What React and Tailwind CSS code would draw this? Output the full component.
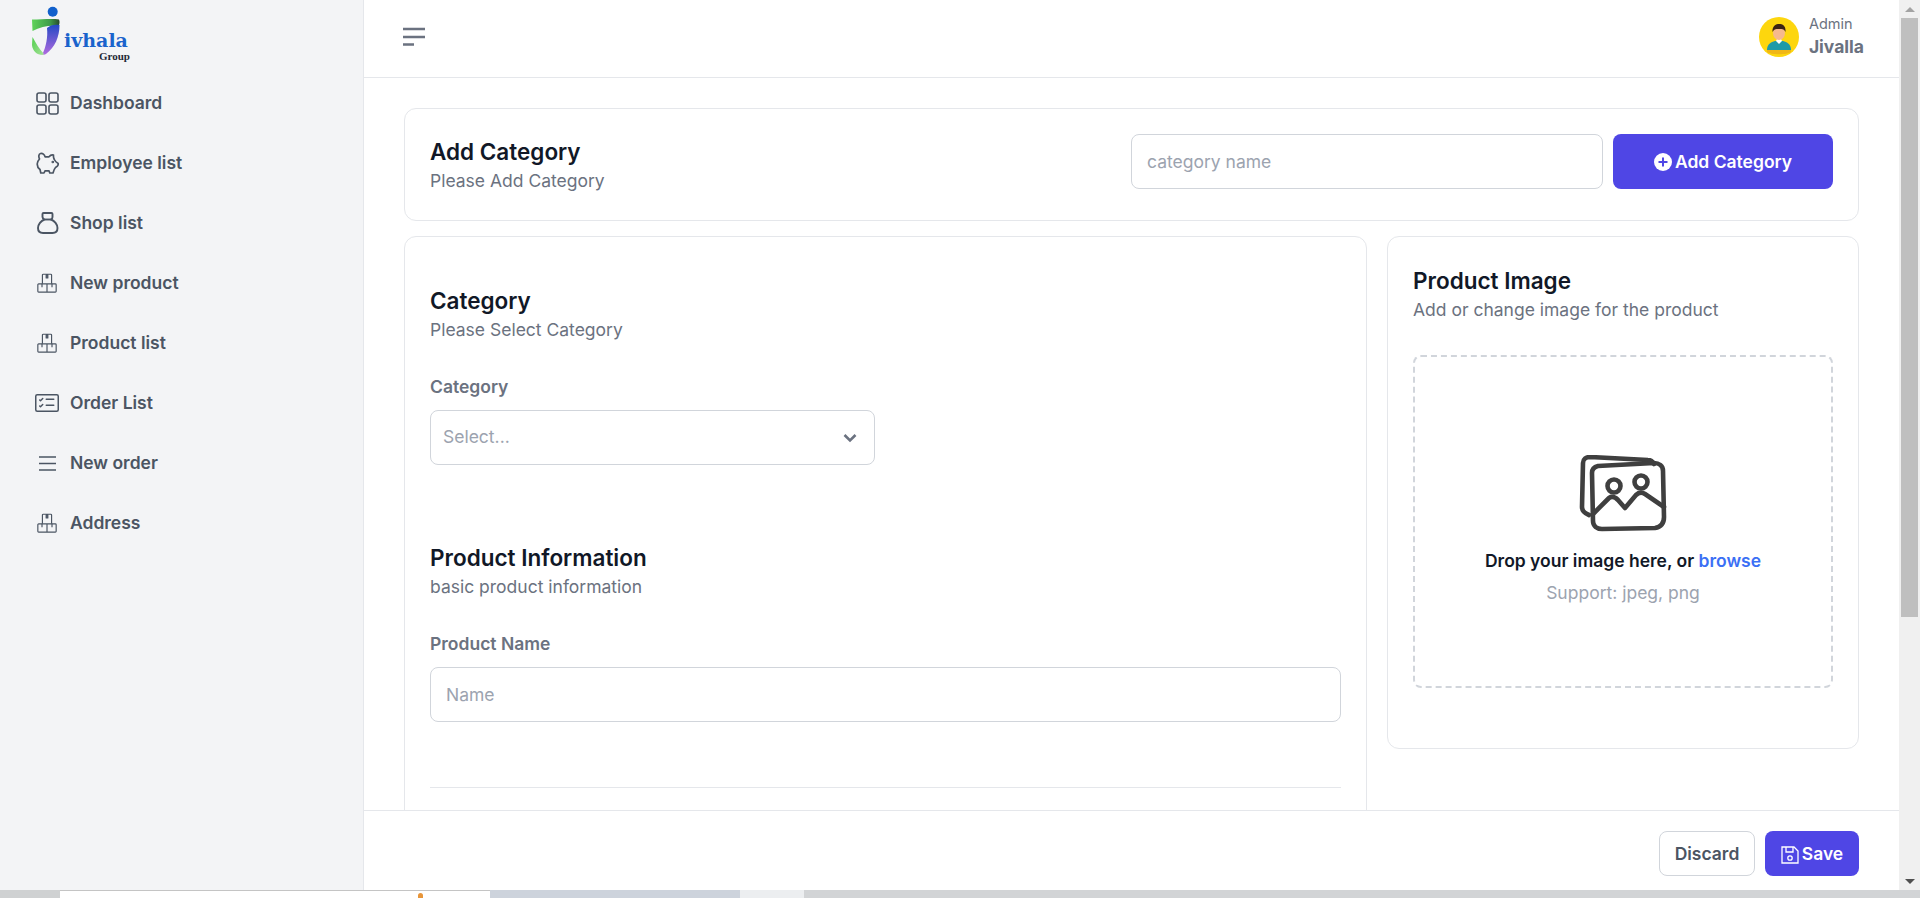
import { BsCardChecklist } from 'react-icons/bs'

const font = { fontFamily: 'Inter, sans-serif' }

function GridIcon() {
  return (
    <svg width="24" height="24" viewBox="0 0 24 24" fill="none" stroke="currentColor" strokeWidth="1.6">
      <rect x="2" y="2" width="9" height="9" rx="2" />
      <rect x="14" y="2" width="9" height="9" rx="2" />
      <rect x="2" y="14" width="9" height="9" rx="2" />
      <rect x="14" y="14" width="9" height="9" rx="2" />
    </svg>
  )
}

function PiggyIcon() {
  return (
    <svg width="24" height="24" viewBox="0 0 24 24" fill="none" stroke="currentColor" strokeWidth="1.7" strokeLinejoin="round" strokeLinecap="round">
      <path d="M4.5 8 C3.5 6 3.5 3 5.5 2.5 C7.5 2 9.8 3.5 10 5.8 H14 C15 4.5 17 3.5 18.5 4 C18.3 5.5 18.5 7 19.3 8.5 C20 10 21.5 11.5 23.2 12.5 C23.5 14 22.8 15.3 20.5 16.5 C19.5 17.5 18.8 19 18 22 H14.8 L14 19.8 H10 L9 22 H5.8 L5 18.5 C3 17 2 15 2.3 12.5 C2.5 10.5 3.3 9.3 4.5 8 Z" />
      <circle cx="17.8" cy="11" r=".5" fill="currentColor" />
    </svg>
  )
}

function BagIcon() {
  return (
    <svg width="24" height="24" viewBox="0 0 24 24" fill="none" stroke="currentColor" strokeWidth="1.9" strokeLinejoin="round">
      <path d="M8.5 2 h8 a1 1 0 0 1 1 1 v3 c0 1 -.5 2 -1.5 2.5 c3.5 1.2 6.5 4.8 6.5 8.5 c0 3.5 -2 5 -5 5 H8 c-3 0 -5 -1.5 -5 -5 c0 -3.7 3 -7.3 6.5 -8.5 c-1 -.5 -2 -1.5 -2 -2.5 v-3 a1 1 0 0 1 1 -1 Z" />
      <path d="M9.5 8.5 h6.5" />
    </svg>
  )
}

function BoxesIcon() {
  return (
    <svg width="20" height="20" viewBox="0 0 24 24" fill="none" stroke="currentColor" strokeWidth="1.4" strokeLinejoin="round">
      <path d="M6.5 13 V2.5 a1 1 0 0 1 1 -1 h9 a1 1 0 0 1 1 1 V13" />
      <path d="M12 13 H2 a1 1 0 0 0 -1 1 v8 a1 1 0 0 0 1 1 h20 a1 1 0 0 0 1 -1 v-8 a1 1 0 0 0 -1 -1 h-10 v10" />
      <path d="M11 2 v4 h2 V2 Z M6 13 v4 M18 13 v4" fill="currentColor" />
    </svg>
  )
}

function LinesIcon() {
  return (
    <svg width="24" height="24" viewBox="0 0 24 24" fill="none" stroke="currentColor" strokeWidth="1.3">
      <path d="M4 6 H21 M4 12.5 H21 M4 19 H21" />
    </svg>
  )
}

function Logo() {
  return (
    <div className="flex flex-col w-[100px] h-[64px] relative">
      <svg width="46" height="60" viewBox="0 0 46 60" className="absolute left-0 top-[4px]">
        <defs>
          <linearGradient id="jgreen" x1="0" y1="0" x2="1" y2="0">
            <stop offset="0" stopColor="#5fd35a" />
            <stop offset="0.65" stopColor="#3f9c4a" />
            <stop offset="1" stopColor="#27482a" />
          </linearGradient>
          <linearGradient id="jblue" x1="0" y1="0" x2="0" y2="1">
            <stop offset="0" stopColor="#2448c4" />
            <stop offset="1" stopColor="#b06be0" />
          </linearGradient>
          <linearGradient id="jleft" x1="0" y1="0" x2="1" y2="1">
            <stop offset="0" stopColor="#4fce4c" />
            <stop offset="1" stopColor="#a7e29a" />
          </linearGradient>
        </defs>
        <circle cx="22.7" cy="7.7" r="5" fill="#1160cc" />
        <path d="M2 15.5 C12 15.5 22 14.5 29 15.5 C30 18 29.5 20 28.5 22 C21 21 11 22 2.5 27 Z" fill="url(#jgreen)" />
        <path d="M17 24 C20 21 25 20 29.5 21 C29.5 33 25 43 16 50 C14.5 51 13 51 12.5 50 C16 43 18 33 17 24 Z" fill="url(#jblue)" />
        <path d="M2.5 33 C6 39 9 45 14 50 L12.5 51 C7 51 2.5 47 2 41 Z" fill="url(#jleft)" />
      </svg>
      <span className="absolute left-[34px] top-[25px] text-[19px] font-bold leading-[30px] text-[#1a63cc]" style={{ fontFamily: '"DejaVu Serif", serif' }}>ivhala</span>
      <span className="absolute left-[69px] top-[49px] text-[11px] font-bold leading-[14px] text-[#1f2937]" style={{ fontFamily: '"Liberation Serif", serif' }}>Group</span>
    </div>
  )
}

function Avatar() {
  return (
    <svg width="40" height="40" viewBox="0 0 40 40">
      <circle cx="20" cy="20" r="20" fill="#fdd60e" />
      <path d="M8 33 C8 27 12 25 16 24 H24 C28 25 32 27 32 33 Z" fill="#1f9aa8" />
      <path d="M8 33 H32 V35 C28 38 12 38 8 35 Z" fill="#f0b616" />
      <path d="M17 24 L20 27 L23 24 L22 22 H18 Z" fill="#ffffff" />
      <ellipse cx="20" cy="16" rx="6" ry="7" fill="#f6b98c" />
      <path d="M13.5 15 C13 9 17 7 20 7 C24 7 27 9 26.5 15 C25.5 12.5 24 12 20 12 C16 12 15 12.5 13.5 15 Z" fill="#3b2314" />
    </svg>
  )
}

function NavItem({ icon, label }) {
  return (
    <div className="flex items-center h-[60px] pl-[35px] text-[#4b5563]">
      <span className="w-[24px] h-[24px] flex items-center justify-center">{icon}</span>
      <span className="ml-[11px] text-[17.5px] font-semibold">{label}</span>
    </div>
  )
}

const navItems = [
  { label: 'Dashboard', icon: <GridIcon /> },
  { label: 'Employee list', icon: <PiggyIcon /> },
  { label: 'Shop list', icon: <BagIcon /> },
  { label: 'New product', icon: <BoxesIcon /> },
  { label: 'Product list', icon: <BoxesIcon /> },
  { label: 'Order List', icon: <BsCardChecklist size={28} /> },
  { label: 'New order', icon: <LinesIcon /> },
  { label: 'Address', icon: <BoxesIcon /> },
]

function Heading({ title, sub }) {
  return (
    <div>
      <h4 className="text-[22.5px] font-semibold leading-8 text-[#111827]">{title}</h4>
      <p className="mt-[1px] text-[17.5px] leading-6 text-[#6b7280]">{sub}</p>
    </div>
  )
}

function App() {
  return (
    <div className="h-[898px] w-[1920px] overflow-hidden flex flex-col bg-white" style={font}>
      <div className="flex flex-1 min-h-0">
        {/* sidebar */}
        <aside className="w-[364px] bg-[#f3f4f6] border-r border-[#e5e7eb] shrink-0">
          <div className="h-[73px] pl-[30px]">
            <Logo />
          </div>
          <nav>
            {navItems.map((item) => (
              <NavItem key={item.label} icon={item.icon} label={item.label} />
            ))}
          </nav>
        </aside>

        <div className="flex-1 min-w-0 flex flex-col">
          {/* top bar */}
          <header className="h-[78px] shrink-0 border-b border-[#e5e7eb] flex items-center justify-between pb-[4px] pr-[35px]">
            <svg className="ml-[39px]" width="22" height="22" viewBox="0 0 22 22" fill="none" stroke="#6b7280" strokeWidth="2.5">
              <path d="M0 3 H22 M0 11 H22 M0 18.5 H11" />
            </svg>
            <div className="flex items-center gap-[10px]">
              <Avatar />
              <div className="flex flex-col gap-[1px]">
                <span className="text-[14.5px] leading-5 text-[#6b7280]">Admin</span>
                <span className="text-[17.5px] leading-6 font-bold text-[#6b7280]">Jivalla</span>
              </div>
            </div>
          </header>

          {/* content */}
          <main className="flex-1 min-h-0 overflow-hidden pt-[30px] pl-[40px] pr-[40px] flex flex-col gap-[15px]">
            <div className="h-[113px] shrink-0 border border-[#e5e7eb] rounded-xl flex items-center justify-between pl-[25px] pr-[25px]">
              <Heading title="Add Category" sub="Please Add Category" />
              <div className="flex items-center gap-[10px] mb-[6px]">
                <div className="w-[472px] h-[55px] border border-[#d1d5db] rounded-lg flex items-center pl-[15px] pt-[1px] text-[17.5px] text-[#9ca3af]">category name</div>
                <button className="w-[220px] h-[55px] rounded-lg bg-[#4f46e5] text-white text-[17.5px] font-semibold flex items-center justify-center gap-[3px] pt-[1px]">
                  <svg width="18" height="18" viewBox="0 0 18 18">
                    <circle cx="9" cy="9" r="9" fill="#ffffff" />
                    <path d="M9 4.5 V13.5 M4.5 9 H13.5" stroke="#4f46e5" strokeWidth="2" />
                  </svg>
                  Add Category
                </button>
              </div>
            </div>

            <div className="flex gap-[20px] items-start flex-1 min-h-0">
              <div className="flex-1 h-[700px] border border-[#e5e7eb] rounded-xl pt-[48px] px-[25px]">
                <Heading title="Category" sub="Please Select Category" />
                <label className="block mt-[33px] text-[17.5px] leading-6 font-semibold text-[#6b7280]">Category</label>
                <div className="mt-[11px] w-[445px] h-[55px] border border-[#d1d5db] rounded-lg flex items-center justify-between pl-[12px] pr-[17px] text-[17.5px] text-[#9ca3af]">
                  Select...
                  <svg width="14" height="10" viewBox="0 0 14 10" fill="none" stroke="#6b7280" strokeWidth="2.6">
                    <path d="M1.5 2 L7 7.5 L12.5 2" />
                  </svg>
                </div>
                <div className="mt-[77px]">
                  <Heading title="Product Information" sub="basic product information" />
                </div>
                <label className="block mt-[33px] text-[17.5px] leading-6 font-semibold text-[#6b7280]">Product Name</label>
                <div className="mt-[11px] h-[55px] border border-[#d1d5db] rounded-lg flex items-center pl-[15px] pt-[1px] text-[17.5px] text-[#9ca3af]">Name</div>
                <div className="mt-[65px] border-t border-[#e5e7eb]"></div>
              </div>

              <div className="w-[472px] h-[513px] border border-[#e5e7eb] rounded-xl pt-[28px] px-[25px]">
                <Heading title="Product Image" sub="Add or change image for the product" />
                <div className="mt-[33px] h-[333px] border-2 border-dashed border-[#d1d5db] rounded-lg flex flex-col items-center pt-[98px]">
                  <svg width="90" height="78" viewBox="0 0 90 78" fill="none" stroke="#3f3f3f" strokeWidth="4.6" strokeLinejoin="round" strokeLinecap="round">
                    <path d="M11 60 C6 58 4 56 4 52 L5 8 C5 4 8 2 12 2 L70 5 C73 5 75 7 76 9" />
                    <path d="M14 18 C14 14 16 12 20 11 L76 8 C81 8 85 11 85 16 L86 62 C86 68 83 72 77 73 L24 74 C19 74 15 71 15 66 Z" />
                    <circle cx="36" cy="31" r="6.5" />
                    <circle cx="63" cy="27" r="6.5" />
                    <path d="M15 59 L31 43 C34 41 37 42 40 45 L47 53 L58 40 C61 37 64 37 67 39 L86 52" />
                  </svg>
                  <p className="mt-[16px] text-[17.5px] leading-6 font-semibold text-[#111827]">Drop your image here, or <span className="text-[#3b6ff5]">browse</span></p>
                  <p className="mt-[8px] text-[17.5px] leading-6 text-[#9ca3af]">Support: jpeg, png</p>
                </div>
              </div>
            </div>
          </main>

          {/* footer actions */}
          <footer className="h-[80px] shrink-0 border-t border-[#e5e7eb] flex items-start justify-end gap-[10px] pt-[20px] pr-[40px] bg-white">
            <button className="w-[96px] h-[45px] border border-[#d1d5db] rounded-lg text-[17.5px] font-semibold text-[#4b5563] pt-[2px]">Discard</button>
            <button className="w-[94px] h-[45px] rounded-lg bg-[#4f46e5] text-white text-[17.5px] font-semibold flex items-center justify-center gap-[3px] pt-[2px]">
              <svg width="18" height="18" viewBox="0 0 18 18" fill="none" stroke="#ffffff" strokeWidth="1.3">
                <path d="M1 1 H13 L17 5 V17 H1 Z" />
                <path d="M5 1 V6 H12 V1" />
                <circle cx="9" cy="12" r="2.2" />
              </svg>
              Save
            </button>
          </footer>
        </div>

        {/* window scrollbar */}
        <div className="w-[21px] shrink-0 bg-[#f0f0f0] flex flex-col items-center">
          <div className="h-[18px] flex items-center justify-center">
            <div className="w-0 h-0 border-x-[5px] border-x-transparent border-b-[5px] border-b-[#a3a3a3]"></div>
          </div>
          <div className="w-[17px] h-[599px] bg-[#bfbfbf]"></div>
          <div className="mt-auto h-[18px] flex items-center justify-center">
            <div className="w-0 h-0 border-x-[5px] border-x-transparent border-t-[5px] border-t-[#505050]"></div>
          </div>
        </div>
      </div>

      {/* strip of the desktop behind the window */}
      <div className="h-[8px] shrink-0 flex bg-[#d2d4d6]">
        <div className="w-[60px] bg-[#cfd1d2]"></div>
        <div className="w-[430px] bg-white border-t border-[#c4c4c4] flex items-start pl-[358px] pt-[2px]">
          <div className="w-[5px] h-[6px] rounded-t-sm bg-[#e8963a]"></div>
        </div>
        <div className="w-[250px] bg-[#cdd3dc]"></div>
        <div className="w-[64px] bg-[#eceef0]"></div>
        <div className="flex-1 bg-[#d2d4d6]"></div>
      </div>
    </div>
  )
}

export default App
